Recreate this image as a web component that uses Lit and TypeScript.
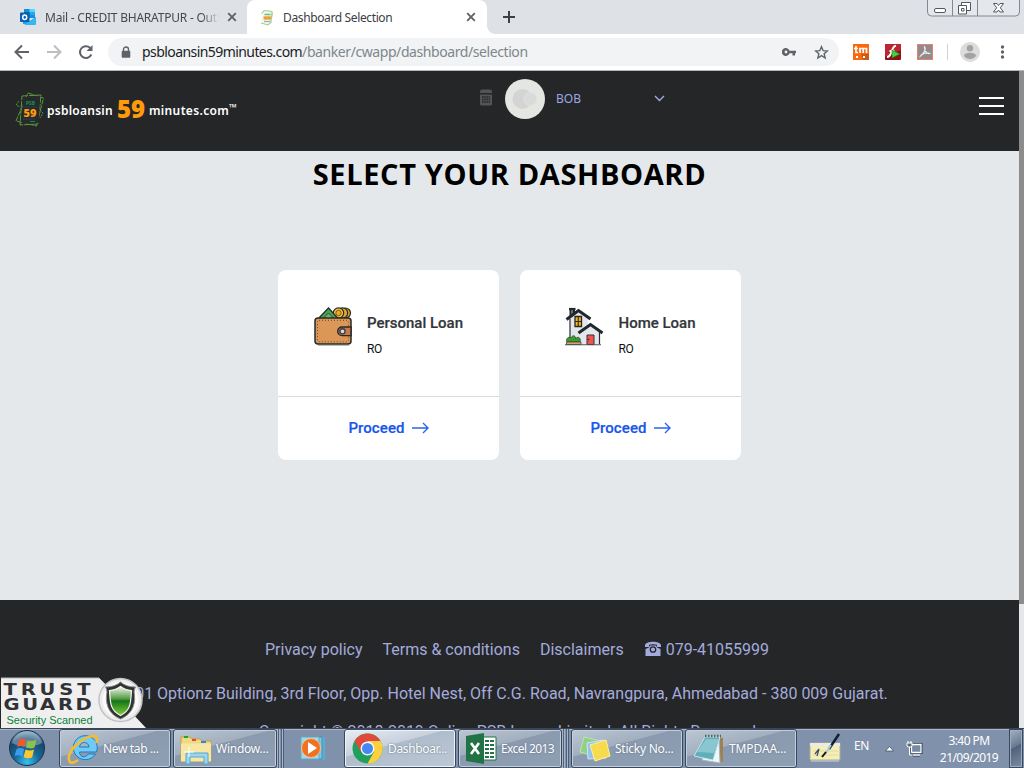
import { LitElement, html, css } from "lit";
import { customElement, property } from "lit/decorators.js";

const closeIcon = html`<svg class="close" width="10" height="10" viewBox="0 0 10 10"><path d="M1.2 1.2l7.6 7.6M8.8 1.2L1.2 8.8" stroke="#5f6368" stroke-width="1.9" fill="none"/></svg>`;

@customElement("browser-chrome")
class BrowserChrome extends LitElement {
  static styles = css`
    :host { display: block; height: 70px; font-family: "Noto Sans", sans-serif; }
    svg { display: block; flex: none; }
    .strip { height: 34px; background: #dee1e6; display: flex; }
    .tab { display: flex; align-items: center; box-sizing: border-box; height: 34px; font-size: 12px; color: #45494d; white-space: nowrap; }
    .tab1 { width: 247px; padding-left: 20px; }
    .tab2 { width: 240px; padding-left: 12px; background: #fff; border-radius: 8px 8px 0 0; color: #3c4043; }
    .tab1 .name { margin-left: 8px; width: 174px; overflow: hidden; letter-spacing: -.22px; -webkit-mask-image: linear-gradient(90deg, #000 90%, transparent); }
    .tab2 .name { margin-left: 7px; width: 173px; letter-spacing: -.37px; }
    .tab1 .close { margin-left: 8px; }
    .tab2 .close { margin-left: 10px; }
    .corner { width: 8px; height: 34px; background: radial-gradient(circle at 8px 0, transparent 7.5px, #fff 8px) 0 26px / 8px 8px no-repeat; }
    .plus { margin: 11px 0 0 8px; }
    .winbtns { margin-left: auto; margin-right: 3px; }
    .bar { height: 36px; background: #fff; display: flex; align-items: center; }
    .back { margin-left: 14px; }
    .fwd { margin-left: 16px; }
    .reload { margin-left: 16px; }
    .omni { margin-left: 13px; width: 731px; height: 28px; border-radius: 14px; background: #f1f3f4; display: flex; align-items: center; box-sizing: border-box; padding-left: 13px; }
    .url { flex: none; margin-left: 11px; font-size: 14px; color: #202124; letter-spacing: -.57px; white-space: nowrap; width: 640px; line-height: 28px; }
    .url .path { color: #80868b; letter-spacing: -.42px; }
    .star { margin-left: 18px; }
    .ext1 { margin-left: 14px; }
    .ext { margin-left: 16px; }
    .div { width: 1px; height: 16px; background: #cfd1d4; margin-left: 14px; }
    .user { margin-left: 12px; }
    .dots { margin-left: 20px; }
  `;
  render() {
    return html`
      <div class="strip">
        <div class="tab tab1">
          <svg width="17" height="16" viewBox="0 0 17 16">
            <path d="M4 0h11v9H4z" fill="#1490df"/><path d="M9.500 0H15v3H9.500z" fill="#50d9ff"/><path d="M9.500 3H15v3H9.500z" fill="#28a8ea"/><path d="M4 3h5.500v6H4z" fill="#0364b8"/>
            <path d="M3 15V9l7 3 6-4v7z" fill="#1ea0ec"/><path d="M4 16l12-8v7a1 1 0 0 1-1 1z" fill="#35b8f1"/>
            <rect y="3.500" width="9.500" height="9.500" rx=".8" fill="#0a5fb5"/><ellipse cx="4.700" cy="8.200" rx="2" ry="2.300" fill="none" stroke="#fff" stroke-width="1.500"/>
          </svg>
          <span class="name">Mail - CREDIT BHARATPUR - Outlook</span>${closeIcon}
        </div>
        <div class="tab tab2">
          <svg width="17" height="17" viewBox="0 0 17 17">
            <path d="M4 2l6-1 4 2-1 8-3 5-6-1-2-3z" fill="#f4f9ef"/>
            <path d="M2.500 5L5 1.500l8 1-1 11-3 2.500-7-2M13.500 4l-2 10" fill="none" stroke="#a5cf88" stroke-width="1.100"/>
            <path d="M5.500 5.500h6" stroke="#76b98d" stroke-width="1.600"/><path d="M4.500 9h7.500" stroke="#f2a945" stroke-width="3.500"/><path d="M5.500 8l2 2M9 8l2 2" stroke="#d98338"/><path d="M5 12.500h6" stroke="#9da9c4" stroke-width="1.300"/>
          </svg>
          <span class="name">Dashboard Selection</span>${closeIcon}
        </div>
        <div class="corner"></div>
        <svg class="plus" width="12" height="12"><path d="M6 0v12M0 6h12" stroke="#3c4043" stroke-width="2"/></svg>
        <svg class="winbtns" width="94" height="18" viewBox="0 0 94 18">
          <path d="M.5 0v12a4 4 0 0 0 4 4h84a4 4 0 0 0 4-4V0M25.500 0v16M50.500 0v16" fill="#e4e7eb" stroke="#84898f" stroke-width="1"/>
          <rect x="7.500" y="8.500" width="11" height="4" rx="1.500" fill="#fff" stroke="#54585c"/>
          <path d="M34.500 2.500h9v8h-9z" fill="#fff" stroke="#54585c"/><path d="M31.500 5.500h8v8.500h-8z" fill="#fff" stroke="#54585c"/><path d="M34.500 8.500h2.500v2.500h-2.500z" fill="#fff" stroke="#54585c"/>
          <path d="M66.500 3.500h3.500l1.500 2 1.500-2h3.500l-3.200 4.300 3.200 4.200h-3.500l-1.500-2-1.500 2h-3.500l3.200-4.200z" fill="#fff" stroke="#54585c"/>
        </svg>
      </div>
      <div class="bar">
        <svg class="back" width="16" height="16" viewBox="0 0 16 16"><path d="M15 8H2M8 1.500L1.500 8 8 14.500" fill="none" stroke="#5f6368" stroke-width="2"/></svg>
        <svg class="fwd" width="16" height="16" viewBox="0 0 16 16"><path d="M1 8h13M8 1.500L14.500 8 8 14.500" fill="none" stroke="#bcbec1" stroke-width="2"/></svg>
        <svg class="reload" width="17" height="16" viewBox="0 0 17 16"><path d="M13.300 10.500A5.900 5.900 0 1 1 12 3.800l1 1" fill="none" stroke="#5f6368" stroke-width="2"/><path d="M14.500 1v6H8.500z" fill="#5f6368"/></svg>
        <div class="omni">
          <svg width="10" height="13" viewBox="0 0 10 13"><path d="M2.500 5.500V3.500a2.500 2.500 0 0 1 5 0v2" fill="none" stroke="#5f6368" stroke-width="1.400"/><rect x=".7" y="4.700" width="8.600" height="7" rx="1" fill="#5f6368"/></svg>
          <span class="url">psbloansin59minutes.com<span class="path">/banker/cwapp/dashboard/selection</span></span>
          <svg class="key" width="14" height="8" viewBox="0 0 14 8"><path d="M7.600 2.700H14v2.600h-1v2.200h-2.500V5.300H7.600A4 4 0 1 1 7.600 2.700z" fill="#5f6368"/><circle cx="4" cy="4" r="1.400" fill="#f1f3f4"/></svg>
          <svg class="star" width="15" height="15" viewBox="0 0 15 15"><path d="M7.500 1.700l1.650 4 4.250.3-3.250 2.800 1 4.200-3.650-2.300L3.850 13l1-4.200L1.600 6l4.250-.3z" fill="none" stroke="#5f6368" stroke-width="1.400"/></svg>
        </div>
        <svg class="ext1" width="16" height="16" viewBox="0 0 16 16"><path d="M0 0h16v16H0z" fill="#f9690e"/><path d="M8 10l8 0v6h-6z" fill="#c95a19"/><path d="M3 2v6.500h2M1 4.500h4M7 9V4.500h6.500V9M10.200 4.500V9" fill="none" stroke="#fff" stroke-width="1.700"/><path d="M3 13h2M10 13h2" stroke="#fff" stroke-width="2"/></svg>
        <svg class="ext" width="16" height="16" viewBox="0 0 16 16"><rect width="16" height="16" rx="1" fill="#8f1019"/><path d="M0 0h16v6L0 13z" fill="#b92832"/><path d="M11 2C6 1 8 13 2 13M4.500 7h5" fill="none" stroke="#fff" stroke-width="2"/><path d="M7 6l8 4-8 4z" fill="#45d33a" stroke="#1b6e1c" stroke-width=".6"/></svg>
        <svg class="ext" width="16" height="16" viewBox="0 0 16 16"><rect x=".5" y=".5" width="15" height="15" fill="#928b8b" stroke="#e9806f"/><path d="M7.500 3c2 2-1 7-4 9 1-2 6-4 9-2.500-2 .5-5-2-5-6.500z" fill="none" stroke="#f0eded" stroke-width="1.200"/></svg>
        <div class="div"></div>
        <svg class="user" width="20" height="20" viewBox="0 0 20 20"><circle cx="10" cy="10" r="10" fill="#dcdcdc"/><circle cx="10" cy="6.200" r="3.200" fill="#a3a3a3"/><path d="M4 14c0-4.400 12-4.400 12 0-3 4-9 4-12 0z" fill="#a3a3a3"/></svg>
        <svg class="dots" width="5" height="14" viewBox="0 0 5 14"><circle cx="2.500" cy="2" r="1.700" fill="#5f6368"/><circle cx="2.500" cy="7" r="1.700" fill="#5f6368"/><circle cx="2.500" cy="12" r="1.700" fill="#5f6368"/></svg>
      </div>`;
  }
}

@customElement("loan-card")
class LoanCard extends LitElement {
  @property() name = "";
  static styles = css`
    :host { display: flex; flex-direction: column; width: 221px; height: 190px; background: #fff; border-radius: 8px; font-family: Roboto, sans-serif; }
    svg { display: block; flex: none; }
    .top { display: flex; height: 126px; border-bottom: 1px solid #dbdcdd; justify-content: center; }
    .pic { margin-top: 37px; }
    .info { margin: 42px 0 0 14px; white-space: nowrap; }
    .title { font-size: 15px; line-height: 22px; font-weight: 500; color: #33373b; -webkit-text-stroke: .2px #33373b; }
    .role { font-size: 12px; line-height: 16px; margin-top: 7px; color: #111; letter-spacing: -.4px; }
    .go { flex: 1; display: flex; align-items: center; justify-content: center; color: #1857ea; font-size: 15px; font-weight: 500; letter-spacing: .1px; -webkit-text-stroke: .2px #1857ea; gap: 7px; padding-bottom: 2px; }
  `;
  wallet() {
    return html`<svg class="pic" width="39" height="39" viewBox="0 0 39 39">
      <g stroke="#252b29" stroke-width="1.200"><circle cx="31.500" cy="6" r="5" fill="#e4a62b"/><circle cx="28.500" cy="6" r="5.200" fill="#e4a62b"/><circle cx="24.500" cy="6" r="5.200" fill="#f4bd3b"/><circle cx="24.500" cy="6" r="2.700" fill="#f5a623" stroke-width=".6"/>
      <path d="M4 12L14.500 1l10 11z" fill="#4aa457"/><path d="M9.500 11l5-5 5 5" fill="#6cb56b" stroke-width=".8"/></g>
      <rect x="1" y="11" width="36" height="26" rx="3" fill="#db9658" stroke="#252b29" stroke-width="1.500"/>
      <rect x="3.500" y="13.300" width="31" height="21.500" rx="1.500" fill="none" stroke="#6b4a33" stroke-width="1" stroke-dasharray="1 2"/>
      <path d="M37 20H28a4.300 4.300 0 0 0 0 8.600h9z" fill="#cb7848" stroke="#252b29" stroke-width="1.400"/><circle cx="28.500" cy="24.300" r="2.600" fill="#d8d8d8" stroke="#383e40" stroke-width="1.400"/><path d="M4 38.500h31" stroke="#b9bbbb"/>
    </svg>`;
  }
  house() {
    return html`<svg class="pic" width="39" height="39" viewBox="0 0 39 39">
      <path d="M5.500 10L14 3l9 8v13l-4 13H5z" fill="#e3e6eb"/><path d="M14 25l11-9 9 9v12H14z" fill="#e3e6eb"/>
      <path d="M5 12v21M34.500 25v12" stroke="#272d32" stroke-width="1.200"/><path d="M5.500 2v7M9 2v5" stroke="#22282c" stroke-width="2"/><path d="M7 2v6" stroke="#6b7074" stroke-width="2"/><path d="M4 2h6.500" stroke="#22282c" stroke-width="2.200"/>
      <path d="M1.500 12.500L13.500 3.500 25.500 12" fill="none" stroke="#20282c" stroke-width="3"/><path d="M13.500 26L25.500 17.500 37.500 26" fill="none" stroke="#20282c" stroke-width="3"/>
      <path d="M10 9.500h6.500v10H10z" fill="#f3b714" stroke="#262626" stroke-width="1.300"/><path d="M13.250 9v11M10 14.500h7" stroke="#262626" stroke-width="1.100"/>
      <path d="M22 28h7v9.500h-7z" fill="#ef5350" stroke="#343333" stroke-width="1"/><circle cx="23.500" cy="32.500" r=".8" fill="#222"/>
      <path d="M2 35c-2-4 3-6 4-4 2-4 5-2 4.500 1 2-3.500 6-1 4.500 3z" fill="#3e9a2f" stroke="#26542b" stroke-width=".8"/><path d="M1.500 35h14.500v2.500H1.500z" fill="#d5a46e" stroke="#444" stroke-width=".8"/><path d="M0 37.700h36" stroke="#4c5254" stroke-width="1.100"/>
    </svg>`;
  }
  render() {
    return html`
      <div class="top">${this.name === "Home Loan" ? this.house() : this.wallet()}
        <div class="info"><div class="title">${this.name}</div><div class="role">RO</div></div>
      </div>
      <div class="go"><span>Proceed</span><svg width="17" height="12" viewBox="0 0 17 12"><path d="M0 6h16M11 1l5 5-5 5" fill="none" stroke="#2a65ed" stroke-width="1.400"/></svg></div>`;
  }
}

@customElement("task-bar")
class TaskBar extends LitElement {
  static styles = css`
    :host { display: flex; height: 40px; background: linear-gradient(#3a4452 0 1px, #aab8ca 1px 2px, #8091ab 2px); font-family: "Noto Sans", sans-serif; color: #fff; box-sizing: border-box; position: relative; }
    svg { display: block; flex: none; }
    .orb { margin: 1px 0 0 8px; }
    .btn { display: flex; flex: none; align-items: center; box-sizing: border-box; height: 39px; margin-top: 1px; border: 1px solid #37475d; border-radius: 3px; box-shadow: inset 0 0 0 1px #c3cedc; background: linear-gradient(165deg, #bdc7d3 0, #a2afbf 40%, #8b9aae 41%, #8e9fb4 100%); font-size: 12px; white-space: nowrap; letter-spacing: -.35px; overflow: hidden; text-shadow: 0 0 2px #5a6a80; }
    .active { background: linear-gradient(165deg, #e7edf3 0, #c7d0dc 40%, #afbccb 41%, #bcc8d6 100%); box-shadow: inset 0 0 0 1px #eef3f8; }
    .ie { margin-left: 13px; width: 112px; padding-left: 7px; gap: 4px; }
    .win { margin-left: 2px; width: 104px; padding-left: 5px; gap: 3px; letter-spacing: -.25px; }
    .edge { flex: none; margin-top: 1px; height: 39px; width: 7px; box-sizing: border-box; border-right: 1px solid #4b5e77; background: linear-gradient(90deg, #a7b5c7 0 1px, #52647c 1px 2px, #a5b4c6 2px 3px, #8091ab 3px 4px, #51637b 4px 5px, #a7b5c7 5px); }
    .media { margin: 8px 0 0 16px; }
    .chrome { margin-left: 16px; width: 112px; padding-left: 7px; gap: 5px; }
    .excel { margin-left: 2px; width: 104px; padding-left: 7px; gap: 4px; letter-spacing: -.6px; }
    .sticky { margin-left: 2px; width: 112px; padding-left: 7px; gap: 4px; letter-spacing: -.25px; }
    .note { margin-left: 2px; width: 112px; padding-left: 7px; gap: 4px; letter-spacing: -.1px; }
    .pen { margin: 5px 0 0 12px; }
    .lang { margin: 10px 0 0 12px; width: 17px; font-size: 12px; line-height: 16px; letter-spacing: -.3px; }
    .arrow { margin: 18px 0 0 14px; }
    .net { margin: 12px 0 0 12px; }
    .clock { margin: 4px 0 0 11px; width: 68px; text-align: center; font-size: 12px; line-height: 17px; letter-spacing: -.55px; white-space: nowrap; }
    .desk { margin: 1px 1px 0 auto; width: 14px; height: 39px; box-sizing: border-box; border: 1px solid #394a60; box-shadow: inset 0 0 0 1px #9eacbd; background: linear-gradient(150deg, #a5b0bf, #67788f 45%, #50627b 46%, #7b8ca4); }
  `;
  render() {
    return html`
      <svg class="orb" width="38" height="38" viewBox="0 0 38 38"><defs><radialGradient id="o" cx=".5" cy=".9" r=".9"><stop stop-color="#37c2ef"/><stop offset=".4" stop-color="#176797"/><stop offset=".75" stop-color="#1a4668"/><stop offset="1" stop-color="#8eb2cc"/></radialGradient></defs>
        <circle cx="19" cy="19" r="17.500" fill="url(#o)" stroke="#18344e"/><path d="M4 14a15.500 15.500 0 0 1 30 0c-7 4-22 5-30 0z" fill="#c8dceb" opacity=".4"/>
        <path d="M11 11c3-2 5-1 7 0l-1.500 7c-3-1.500-5-1-7.500 0z" fill="#f0592b"/><path d="M19.500 11.500c4 1 6 .5 9-1l-2 8c-3 1.500-5 1-8.500 0z" fill="#8bc34a"/><path d="M8.600 20c3-1.500 5-1 7.500 0l-2 7.500c-2-1.500-5-1.500-7.500-.5z" fill="#3c9cea"/><path d="M17.600 20.500c3 1.500 6 1 8.500 0l-2 8c-3 1-6 1-8.500-.5z" fill="#fcc62c"/></svg>
      <div class="btn ie"><svg width="32" height="32" viewBox="0 0 32 32"><path d="M21 21h7.500A12 12 0 1 1 29.500 19H12.500c.5 6 6.500 6 8.500 2zM12.500 14h9.500c-.5-6-9-6-9.500 0z" fill="#6ecbf7" stroke="#1f78bd" stroke-width="1"/><path d="M29 10c2-4 1-8-3-7C15 4 0 18 2 27c1 5 6 2 9 0" fill="none" stroke="#f4bd2e" stroke-width="2.600"/></svg>New tab ...</div>
      <div class="btn win"><svg width="34" height="32" viewBox="0 0 34 32"><path d="M2 4h9l2 2h8l2 2h9v20H2z" fill="#f0d984" stroke="#c69e43"/><path d="M5 4h4" stroke="#22a52f" stroke-width="2"/><path d="M13 7h4" stroke="#e44b32" stroke-width="2"/><path d="M22 9h5" stroke="#268ae4" stroke-width="2"/><path d="M2 10.500h30v18H2z" fill="#f7e7a4"/><path d="M7 31V20h22v11h-4v-7H11v7z" fill="#9bd5f0" stroke="#55a9d0"/><path d="M10 14v10M5 19h10" stroke="#fff"/></svg>Window...</div>
      <div class="edge"></div>
      <svg class="media" width="28" height="25" viewBox="0 0 28 25"><path d="M7 1h18v23H7z" fill="#5baed2"/><path d="M4 1h18v22H4z" fill="#82c6df" stroke="#488fb0"/><path d="M1 1h18v22H1z" fill="#a5d7ea" stroke="#69aac8"/><circle cx="11" cy="12" r="9.500" fill="#ef7124" stroke="#fac089"/><path d="M8 6l9 6-9 6z" fill="#fff"/></svg>
      <div class="btn active chrome"><svg width="31" height="31" viewBox="0 0 31 31"><circle cx="15.500" cy="15.500" r="15" fill="#20a05a"/><path d="M2.500 8A15 15 0 0 1 28.500 8H15.500l-6.500 11z" fill="#de4b3d"/><path d="M28.500 8a15 15 0 0 1-13 22.500L22 19 15.500 8z" fill="#fdd13e"/><circle cx="15.500" cy="15.500" r="6.900" fill="#f6f8fb"/><circle cx="15.500" cy="15.500" r="5.500" fill="#4688f1"/></svg>Dashboar...</div>
      <div class="btn excel"><svg width="31" height="31" viewBox="0 0 31 31"><path d="M16 4h14v23H16z" fill="#fff" stroke="#1f7244"/><path d="M19 8h9M19 12h9M19 16h9M19 20h9M19 24h9" stroke="#217346" stroke-width="2.200"/><path d="M23.500 5v21" stroke="#fff"/><path d="M0 3l18-3v31L0 28z" fill="#217346"/><path d="M5 10l8 11M13 10L5 21" stroke="#fff" stroke-width="2.600"/></svg>Excel 2013</div>
      <div class="edge"></div>
      <div class="btn sticky"><svg width="32" height="29" viewBox="0 0 32 29"><path d="M5 3l17 4-5 16-16-5z" fill="#91d183" stroke="#b9e5b0"/><path d="M8 9l16-3 3 18-18 1z" fill="#93c4ef" stroke="#cde6fa"/><path d="M11 11l16-5 4 16-15 5z" fill="#f8da4d" stroke="#ffefa1"/></svg>Sticky No...</div>
      <div class="btn note"><svg width="32" height="30" viewBox="0 0 32 30"><path d="M26 3l4 1v23l-4 2z" fill="#9e8054"/><path d="M12 4l14 1 1 24-18-3z" fill="#eff7f9" stroke="#a2b6bd"/><path d="M12 3h15L20 26 1 22z" fill="#61aebb" stroke="#c7e4e9"/><path d="M13 5h13L21 19 4 18z" fill="#a5d5dc" opacity=".6"/><path d="M12 2h16" stroke="#566468" stroke-width="2.500" stroke-dasharray="1.500 1.500"/></svg>TMPDAA...</div>
      <svg class="pen" width="33" height="32" viewBox="0 0 33 32"><path d="M1 10h30v17H1z" fill="#f6efb4" stroke="#a9a9a0"/><path d="M1 10h30v3H1z" fill="#e9eaec"/><path d="M4 18h25M4 22h25" stroke="#e0daae"/><path d="M6 21l4-5-2 7" fill="none" stroke="#40506a" stroke-width="1.300"/><path d="M2 28h28" stroke="#cfd4d8"/><path d="M30 1L20 16" stroke="#10212f" stroke-width="2.500"/><path d="M22 12l-6 9" stroke="#a4ccdc" stroke-width="2"/><path d="M17 19l-4 5" stroke="#111" stroke-width="2"/></svg>
      <span class="lang">EN</span>
      <svg class="arrow" width="9" height="6" viewBox="0 0 9 6"><path d="M4.500 .5l4 4.500h-8z" fill="#fff" stroke="#35465b" stroke-width=".7"/></svg>
      <svg class="net" width="18" height="18" viewBox="0 0 18 18"><path d="M5.500 4.500h9.500v8H5.500zM7 15h7" fill="#7889a3" stroke="#26384e" stroke-width="3"/><path d="M5.500 4.500h9.500v8H5.500zM7 15h7" fill="#7889a3" stroke="#fff" stroke-width="1.300"/><path d="M1 3h5v3l-1 1H2L1 6zM2 1v2M5 1v2M3.500 7v8H6" fill="#5d6c80" stroke="#fff"/></svg>
      <div class="clock">3:40 PM<br>21/09/2019</div><div class="desk"></div>`;
  }
}

@customElement("app-root")
class AppRoot extends LitElement {
  static styles = css`
    :host { display: flex; flex-direction: column; width: 1024px; height: 768px; overflow: hidden; font-family: Roboto, sans-serif; position: relative; }
    svg { display: block; flex: none; }
    browser-chrome, task-bar { flex: none; }
    .view { display: flex; flex: 1; min-height: 0; border-top: 1px solid #b5b6b7; }
    .page { width: 1019px; height: 657px; overflow: hidden; }
    .scroll { width: 5px; background: linear-gradient(#8c8c8c 0 533px, #e4e8eb 533px); }
    .head { height: 80px; background: #252628; display: flex; }
    .logo { display: flex; padding: 21px 0 0 15px; width: 464px; box-sizing: border-box; font-family: "Noto Sans", sans-serif; font-weight: 600; font-size: 12px; color: #fff; white-space: nowrap; }
    .logo span { line-height: 18px; margin-top: 10px; }
    .logo .word1 { margin-left: 2px; width: 70px; letter-spacing: .25px; }
    .logo .num { font-family: "Open Sans", sans-serif; font-weight: 800; font-size: 24px; color: #ff9b0b; line-height: 30px; margin-top: 2px; width: 32px; }
    .logo .word2 { letter-spacing: .35px; width: 80px; }
    .logo .tm { font-size: 10px; line-height: 10px; margin-top: 10px; font-weight: 700; }
    .calc { margin: 18px 0 0 15px; }
    .avatar { margin: 8px 0 0 12px; }
    .bob { font-family: "Noto Sans", sans-serif; font-size: 12px; line-height: 16px; color: #9ca6e0; margin: 20px 0 0 11px; width: 98px; }
    .chev { margin-top: 24px; }
    .burger { width: 25px; height: 18px; margin: 26px 15px 0 auto; display: flex; flex-direction: column; justify-content: space-between; }
    .burger i { height: 2px; background: #fff; }
    .main { height: 449px; background: #e4e8eb; }
    h1 { margin: 0; padding-top: 3px; font-family: "Open Sans", sans-serif; font-weight: 700; font-size: 29px; line-height: 40px; text-align: center; color: #000; letter-spacing: .63px; }
    .cards { display: flex; justify-content: center; gap: 21px; margin-top: 76px; }
    .foot { height: 128px; background: #252628; color: #a4abdc; font-size: 16px; white-space: nowrap; }
    .links { display: flex; height: 20px; padding: 40px 0 0 265px; line-height: 20px; gap: 20px; }
    .phone { display: flex; gap: 5px; }
    .phone svg { margin: 1px 0 0 1px; }
    .line { text-align: center; line-height: 20px; padding: 24px 5px 0 0; }
    .line + .line { padding: 18px 0 0; }
    .seal { position: absolute; left: 0; top: 677px; }
  `;
  render() {
    return html`
      <browser-chrome></browser-chrome>
      <div class="view">
        <div class="page">
          <header class="head">
            <div class="logo">
              <svg width="30" height="36" viewBox="0 0 30 36"><g fill="none" stroke="#5c983f" stroke-width="1"><path d="M13 1l15.500 5-7 28L1 29z" stroke-dasharray="5 1"/><path d="M7 4l19-1-3 29-18 1z" stroke-dasharray="6 1"/><path d="M4 9l-3 4 4 2M25 18l3 3-3 5" stroke-dasharray="2 1"/></g><path d="M8 5l17-1-1 27-17 1z" fill="#262b29"/><text x="11" y="13" font-family="Noto Sans" font-size="5" font-weight="700" fill="#159149">PSB</text><text x="8.500" y="25" font-family="Open Sans" font-size="11" font-weight="800" fill="#ff9b0b">59</text><path d="M8 15h14M8 27h12" stroke="#273d86" stroke-dasharray="2 .6"/><path d="M15 29.500h5" stroke="#25803b"/></svg>
              <span class="word1">psbloansin</span><span class="num">59</span><span class="word2">minutes.com</span><span class="tm">™</span>
            </div>
            <svg class="calc" width="14" height="17" viewBox="0 0 14 17"><path d="M1 4V2.500A2 2 0 0 1 3 .5h8a2 2 0 0 1 2 2V4z" fill="#535455"/><path d="M1 5.500h12V15a1.500 1.500 0 0 1-1.500 1.500h-9A1.500 1.500 0 0 1 1 15z" fill="#535455"/><path d="M3 8h8M3 10.500h8M3 13h8" stroke="#252628" stroke-width="1.300" stroke-dasharray="1.500 .7"/></svg>
            <svg class="avatar" width="40" height="40" viewBox="0 0 40 40"><circle cx="20" cy="20" r="20" fill="#e4e6e2"/><circle cx="17.500" cy="20" r="10" fill="#d4d4d4"/><circle cx="25.500" cy="20" r="6.500" fill="#dadada" stroke="#e3e4e1" stroke-width=".8"/></svg>
            <span class="bob">BOB</span>
            <svg class="chev" width="11" height="7" viewBox="0 0 11 7"><path d="M1 1l4.500 4.500L10 1" fill="none" stroke="#a2abe4" stroke-width="1.400"/></svg>
            <div class="burger"><i></i><i></i><i></i></div>
          </header>
          <main class="main">
            <h1>SELECT YOUR DASHBOARD</h1>
            <div class="cards"><loan-card name="Personal Loan"></loan-card><loan-card name="Home Loan"></loan-card></div>
          </main>
          <footer class="foot">
            <div class="links"><span>Privacy policy</span><span>Terms &amp; conditions</span><span>Disclaimers</span>
              <span class="phone"><svg width="16" height="15" viewBox="0 0 16 15"><path d="M0 4.500C0-.5 16-.5 16 4.500V6h-4V3.800C10 3 6 3 4 3.800V6H0z" fill="#a4abdc"/><path d="M5 4.500h6l1 2 3.500 1.500V15H.5V8L4 6.500z" fill="#a4abdc"/><circle cx="8" cy="8.500" r="2.700" fill="#a4abdc" stroke="#252628" stroke-width="1.300"/></svg>079-41055999</span></div>
            <div class="line">101 Optionz Building, 3rd Floor, Opp. Hotel Nest, Off C.G. Road, Navrangpura, Ahmedabad - 380 009 Gujarat.</div>
            <div class="line">Copyright © 2018-2019 Online PSB Loans Limited. All Rights Reserved.</div>
          </footer>
        </div>
        <div class="scroll"></div>
      </div>
      <svg class="seal" width="147" height="51" viewBox="0 0 147 51">
        <defs><linearGradient id="g" x2="0" y2="1"><stop stop-color="#f2f8ef"/><stop offset=".42" stop-color="#579b45"/><stop offset=".5" stop-color="#137516"/><stop offset="1" stop-color="#80cf38"/></linearGradient></defs>
        <path d="M1 1h98l47 50H1z" fill="#efefef"/><path d="M1 1h98l8 8" fill="none" stroke="#b9b9b9"/>
        <text x="3.500" y="17.700" font-family="DejaVu Sans" font-size="15" font-weight="700" fill="#303235" letter-spacing="3" textLength="91" lengthAdjust="spacingAndGlyphs">TRUST</text>
        <text x="3.500" y="32.700" font-family="DejaVu Sans" font-size="15" font-weight="700" fill="#303235" letter-spacing="2" textLength="91" lengthAdjust="spacingAndGlyphs">GUARD</text>
        <text x="6.500" y="47" font-family="Liberation Sans" font-size="11" fill="#078236" textLength="86">Security Scanned</text>
        <circle cx="120.500" cy="23" r="21.500" fill="#ececec" stroke="#c2c2c2" stroke-width="1.500"/><circle cx="120.500" cy="23" r="18" fill="#fafafa"/>
        <path d="M120.500 5c4 3.500 9 5 15 5-1 2-2 4-1 8 1 12-4 20-14 24-10-4-15-12-14-24 1-4 0-6-1-8 6 0 11-1.500 15-5z" fill="#303331" stroke="#8a8d8b" stroke-width="1"/>
        <path d="M120.500 9.500c3.500 2.700 7 3.700 11 4-.8 13.500-1 20-11 25-10-5-10.200-11.500-11-25 4-.3 7.500-1.300 11-4z" fill="url(#g)" stroke="#f3f7f1" stroke-width="1.200"/>
      </svg>
      <task-bar></task-bar>`;
  }
}
